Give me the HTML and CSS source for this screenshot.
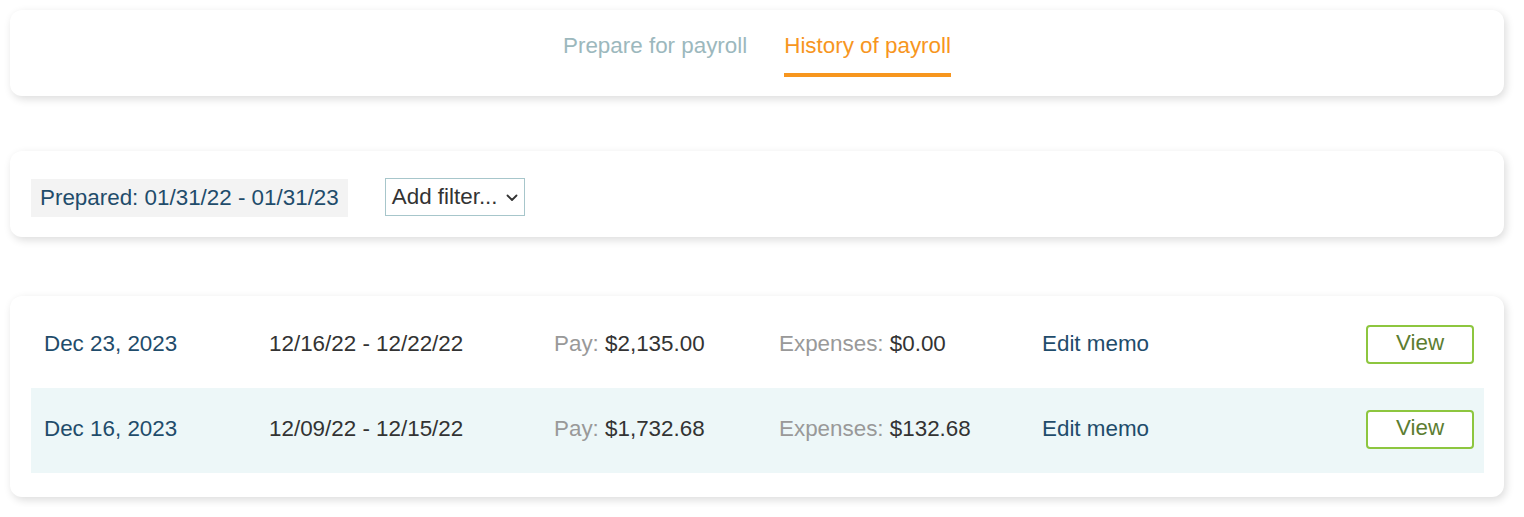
FILE: index.html
```html
<!DOCTYPE html>
<html lang="en">
<head>
<meta charset="utf-8">
<title>Payroll history</title>
<link rel="stylesheet" href="styles.css">
</head>
<body>
<div class="page">
  <div class="card tabs-card">
    <nav class="tabs">
      <a class="tab">Prepare for payroll</a>
      <a class="tab active">History of payroll</a>
    </nav>
  </div>

  <div class="card filter-card">
    <span class="chip">Prepared: 01/31/22 - 01/31/23</span>
    <div class="select">
      <span>Add filter...</span>
      <svg class="chev" width="12" height="8" viewBox="0 0 12 8"><path d="M1.5 1.5 L6 6 L10.5 1.5" fill="none" stroke="#333" stroke-width="1.8" stroke-linecap="round" stroke-linejoin="round"/></svg>
    </div>
  </div>

  <div class="card list-card">
    <div class="row">
      <span class="date">Dec 23, 2023</span>
      <span class="range">12/16/22 - 12/22/22</span>
      <span class="amt"><span class="lbl">Pay:</span> $2,135.00</span>
      <span class="amt"><span class="lbl">Expenses:</span> $0.00</span>
      <span class="memo">Edit memo</span>
      <button class="view">View</button>
    </div>
    <div class="row alt">
      <span class="date">Dec 16, 2023</span>
      <span class="range">12/09/22 - 12/15/22</span>
      <span class="amt"><span class="lbl">Pay:</span> $1,732.68</span>
      <span class="amt"><span class="lbl">Expenses:</span> $132.68</span>
      <span class="memo">Edit memo</span>
      <button class="view">View</button>
    </div>
  </div>
</div>
</body>
</html>
```

FILE: styles.css
```css
* { box-sizing: border-box; }
html, body { margin: 0; padding: 0; background: #fff; }
body {
  font-family: "Liberation Sans", Arial, sans-serif;
  font-size: 22.4px;
  color: #333;
}
.page {
  padding: 10px 20px 10px 10px;
  display: flex;
  flex-direction: column;
}
.card {
  background: #fff;
  border-radius: 12px;
  box-shadow: 2px 3px 9px rgba(0, 0, 0, 0.14);
}
.tabs-card {
  height: 86px;
  display: flex;
  justify-content: center;
}
.tabs {
  display: flex;
  gap: 37px;
  height: 100%;
}
.tab {
  display: flex;
  align-items: flex-start;
  padding-top: 23px;
  color: #9cb8bd;
  border-bottom: 4px solid transparent;
  height: 67px;
  line-height: 26px;
}
.tab.active {
  color: #f7961e;
  border-bottom-color: #f7961e;
}
.filter-card {
  margin-top: 55px;
  height: 86px;
  display: flex;
  align-items: center;
  padding: 0 21px;
  gap: 37px;
}
.chip {
  background: #f3f3f3;
  color: #1f4c6b;
  padding: 0 9px;
  height: 38px;
  line-height: 38px;
  margin-top: 8px;
}
.select {
  display: flex;
  align-items: center;
  gap: 8px;
  height: 38px;
  padding: 0 6px;
  border: 1px solid #a7c6cb;
  color: #333;
  margin-top: 6px;
}
.chev { margin-top: 2px; }
.list-card {
  margin-top: 59px;
  padding: 7px 20px 24px 21px;
}
.row {
  display: grid;
  grid-template-columns: 225px 285px 225px 263px 1fr 108px;
  align-items: center;
  height: 85px;
  padding: 0 10px 3px 13px;
}
.row.alt { background: #edf7f8; }
.date, .memo { color: #1f4c6b; }
.range { color: #333; }
.lbl { color: #999; }
.amt { color: #333; }
.view {
  grid-column: 6;
  width: 108px;
  height: 39px;
  border: 2px solid #8dc63f;
  border-radius: 4px;
  background: #fff;
  color: #5c7d31;
  font-family: inherit;
  font-size: 22.4px;
  padding: 0 0 2px 0;
  margin-top: 0;
}
```
